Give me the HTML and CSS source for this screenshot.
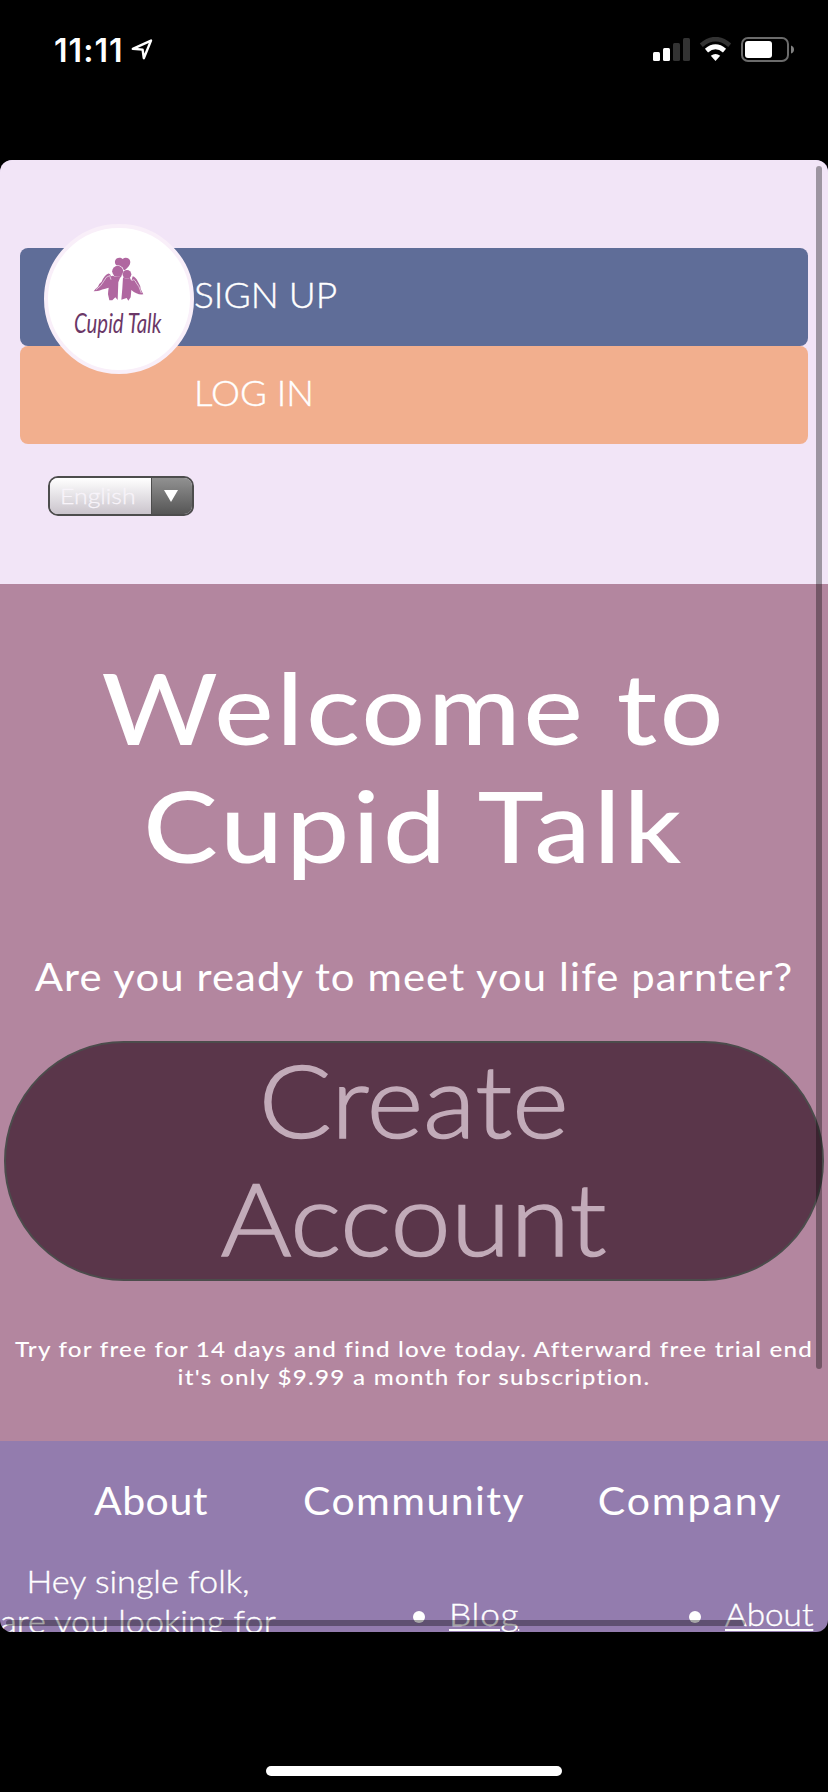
FILE: index.html
```
<!DOCTYPE html>
<html lang="en">
<head>
<meta charset="utf-8">
<title>Cupid Talk</title>
<link rel="stylesheet" href="styles.css">
</head>
<body>
<div class="status">
  <div class="clock"><span class="time">11:11</span>
    <svg class="arrow" width="22" height="22" viewBox="0 0 22 22"><path d="M1.8 9.8 20 1.6 12.8 19.2 11.6 10.6Z" fill="none" stroke="#fff" stroke-width="2.4" stroke-linejoin="round"/></svg>
  </div>
  <svg class="indicators" width="142" height="26" viewBox="0 0 142 26">
    <rect x="0" y="15" width="7" height="9" rx="1.5" fill="#fff"/>
    <rect x="10" y="11" width="7" height="13" rx="1.5" fill="#fff"/>
    <rect x="20" y="6" width="7" height="18" rx="1.5" fill="#333"/>
    <rect x="30" y="1" width="7" height="23" rx="1.5" fill="#333"/>
    <path d="M48.3 8.2Q62.5 -3.8 76.7 8.2" fill="none" stroke="#333" stroke-width="4.6"/>
    <path d="M53.5 13.6Q62.5 6 71.5 13.6" fill="none" stroke="#fff" stroke-width="4.8"/>
    <path d="M57.8 18.7Q62.5 15.2 67.2 18.7L62.5 24Z" fill="#fff"/>
    <rect x="89" y="1" width="46" height="23" rx="6" fill="none" stroke="#6b6b6b" stroke-width="2"/>
    <rect x="92" y="4" width="27" height="17" rx="3" fill="#fff"/>
    <path d="M138 8.5Q141 9.5 141 12.5T138 16.5Z" fill="#808080"/>
  </svg>
</div>
<main class="page">
  <header class="header">
    <nav class="nav">
      <a class="nav-item signup"><span>SIGN UP</span></a>
      <a class="nav-item login"><span>LOG IN</span></a>
      <div class="logo">
        <svg width="120" height="110" viewBox="0 0 360 330">
          <g fill="#b067a0">
            <path d="M188 74C172 66 163 58 165 48C167 38 181 35 188 42C196 35 210 39 211 51C211 61 204 67 194 76Z"/>
            <circle cx="173" cy="80" r="19" fill="#fff"/>
            <circle cx="173" cy="79" r="16.5"/>
            <circle cx="201" cy="88" r="13"/>
            <path d="M158 92Q172 99 187 91Q177 99 175 112L173 165 166 157 157 166 148 166 144 148Q144 140 146 128Q124 134 113 138L101 139Q106 131 114 125Q116 116 125 110Q133 90 144 86Q151 84 153 94Z"/>
            <path d="M189 97Q200 105 210 98L214 108 218 94Q227 96 234 110Q242 122 242 132L250 148Q232 151 214 135L212 157 205 167 200 159 184 164 187 130Z"/>
            <path d="M180 104Q186 98 185 115L182 163 176 157Z" fill="#fff"/>
          </g>
          <g fill="none" stroke="#fff" stroke-width="1.8">
            <path d="M108 134Q125 122 131 109Q138 93 149 92L153 104M244 144Q237 121 229 114Q222 99 216 107"/>
          </g>
          <text class="wordmark" x="42" y="264" textLength="262" lengthAdjust="spacingAndGlyphs">Cupid Talk</text>
        </svg>
      </div>
    </nav>
    <div class="lang"><span class="lang-name"><span>English</span></span><span class="lang-arrow"><svg width="14" height="14" viewBox="0 0 14 14"><path d="M0 0H14L7 12Z" fill="#fff"/></svg></span></div>
  </header>
  <section class="hero">
    <h1 class="title"><span class="t1">Welcome to</span><br><span class="t2">Cupid Talk</span></h1>
    <p class="lead">Are you ready to meet you life parnter?</p>
    <a class="create"><span>Create<br>Account</span></a>
    <p class="trial">Try for free for 14 days and find love today. Afterward free trial end<br><span class="trial-end">it's only $9.99 a month for subscription.</span></p>
  </section>
  <footer class="footer">
    <div class="col about"><h2>About</h2><p>Hey single folk,<br>are you looking for</p></div>
    <div class="col community"><h2>Community</h2><ul><li class="blog"><a>Blog</a></li></ul></div>
    <div class="col company"><h2>Company</h2><ul><li><a>About</a></li></ul></div>
  </footer>
  <div class="bar-v"></div>
  <div class="bar-h"></div>
</main>
<div class="home"></div>
</body>
</html>
```
FILE: styles.css
```
* { box-sizing: border-box; }
body { margin: 0; width: 828px; height: 1792px; background: #000; color: #fff; font-family: Lato, sans-serif; font-weight: 300; display: flex; flex-direction: column; overflow: hidden; }
h1, h2, p, ul { margin: 0; padding: 0; font-weight: inherit; }
.status { height: 160px; flex: none; display: flex; justify-content: space-between; align-items: flex-start; padding: 37px 34px 0 54px; }
.clock { display: flex; align-items: flex-start; gap: 7px; }
.time { font: 600 32px/28px Inter, sans-serif; letter-spacing: 1.05px; }
.arrow { margin-top: 2px; }
.indicators { margin-right: -1px; }
.page { position: relative; flex: none; height: 1472px; border-radius: 12px; overflow: hidden; background: #937cae; }
.header { height: 424px; padding: 88px 20px 0; background: #f2e5f7; }
.nav { position: relative; display: flex; flex-direction: column; }
.nav-item { height: 98px; line-height: 93px; border-radius: 8px; padding-left: 174px; font-size: 35px; -webkit-text-stroke: .4px; }
.nav-item span { display: inline-block; transform: scaleX(1.06); transform-origin: left; }
.signup { background: #5f6d98; }
.login { background: #f2af8e; }
.login span { transform: scaleX(1.045); }
.logo { position: absolute; left: 24px; top: -24px; width: 150px; height: 150px; border: 4px solid #f9eff9; border-radius: 50%; background: #fff; padding: 17px 0 0 12px; }
.logo svg { display: block; overflow: visible; }
.wordmark { font: italic 400 80px Lato, sans-serif; fill: #6b3767; }
.lang { display: flex; width: 146px; height: 40px; margin: 32px 0 0 28px; border: 2px solid #4d4d4d; border-radius: 10px; overflow: hidden; }
.lang-name { flex: 1; padding-left: 10px; font-size: 22px; line-height: 36px; color: #f8f4fa; -webkit-text-stroke: .3px; background: linear-gradient(#fff, #cac4cc); }
.lang-name span { display: inline-block; transform: scaleX(1.13); transform-origin: left; }
.lang-arrow { width: 41px; display: flex; align-items: center; justify-content: center; padding: 1px 3px 0 0; border-left: 1px solid #4d4d4d; background: linear-gradient(#919191, #565656); }
.hero { height: 857px; padding-top: 64px; background: #b3869f; text-align: center; white-space: nowrap; }
.title { font-size: 99px; line-height: 118px; font-weight: 500; transform: scaleX(1.13); }
.t1 { letter-spacing: 2.57px; }
.t2 { letter-spacing: 2.96px; }
.lead { margin-top: 69px; font-size: 38px; line-height: 46px; font-weight: 400; letter-spacing: 1px; transform: scaleX(1.1); }
.create { display: flex; align-items: center; justify-content: center; width: 820px; height: 240px; margin: 42px auto 0; padding-bottom: 6px; border: 2px solid #4c4c4c; border-radius: 120px; background: #5a364a; color: #c2abb9; font-size: 100px; line-height: 118px; letter-spacing: .2px; -webkit-text-stroke: 1.6px #c2abb9; }
.create span { transform: scaleX(1.08); }
.trial { margin-top: 54px; font-size: 22px; line-height: 28px; font-weight: 500; letter-spacing: 1.11px; transform: scaleX(1.1); }
.trial-end { letter-spacing: 1.15px; }
.footer { display: grid; grid-template-columns: 276px 276px 276px; padding-top: 36px; text-align: center; white-space: nowrap; }
.col h2 { font-size: 38px; line-height: 46px; font-weight: 400; transform: scaleX(1.08); }
.about h2 { letter-spacing: .46px; padding-left: 24px; }
.community h2 { letter-spacing: 1.3px; }
.company h2 { letter-spacing: 1.8px; }
.about p { margin-top: 38px; font-size: 32px; line-height: 40px; -webkit-text-stroke: .4px; transform: scaleX(1.07); }
.col ul { margin-top: 71px; padding-left: 137px; list-style: none; font-size: 32px; line-height: 40px; -webkit-text-stroke: .4px; }
.col li { display: flex; align-items: center; gap: 24px; }
.col li::before { content: ""; width: 12px; height: 12px; margin-top: 6px; border-radius: 50%; background: #fff; }
.col a { text-decoration: underline; text-decoration-thickness: 2px; text-underline-offset: 3px; transform: scaleX(1.04); transform-origin: left; }
.col .blog a { letter-spacing: .7px; transform: scaleX(1.1); }
.bar-v { position: absolute; left: 816px; top: 6px; width: 6px; height: 1203px; border-radius: 3px; background: rgba(0,0,0,.35); }
.bar-h { position: absolute; left: 6px; top: 1460px; width: 739px; height: 6px; border-radius: 3px; background: rgba(0,0,0,.35); }
.home { width: 296px; height: 10px; margin: 134px auto 0; border-radius: 5px; background: #fff; flex: none; }
```
